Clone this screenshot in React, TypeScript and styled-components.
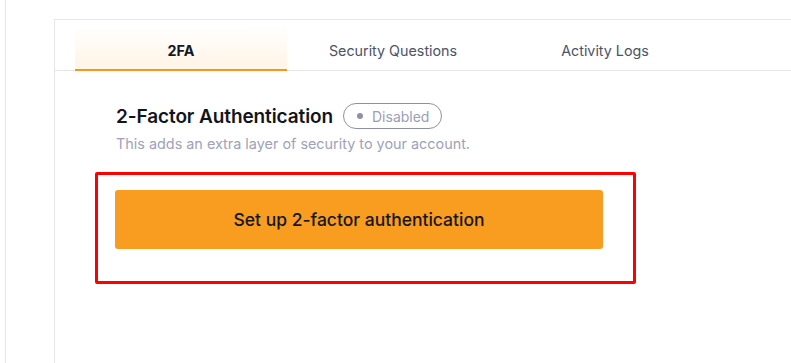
import React, { useState } from "react";
import styled, { createGlobalStyle } from "styled-components";

const Global = createGlobalStyle`
  html, body { margin: 0; padding: 0; background: #ffffff; }
  body { font-family: Inter, "Noto Sans", "Liberation Sans", sans-serif; }
  * { box-sizing: border-box; }
`;

const Page = styled.div`
  display: flex;
  height: 363px;
  overflow: hidden;
`;

const Rail = styled.div`
  width: 6px;
  flex: none;
  border-right: 1px solid #e6e6e6;
`;

const Card = styled.div`
  flex: 1;
  margin-left: 48px;
  margin-top: 19px;
  border-top: 1px solid #e6e6e6;
  border-left: 1px solid #e6e6e6;
  display: flex;
  flex-direction: column;
`;

const TabBar = styled.div`
  display: flex;
  padding: 6px 0 0 20px;
  border-bottom: 1px solid #e6e6e6;
`;

const Tab = styled.button<{ $active?: boolean }>`
  width: 212px;
  height: 45px;
  margin-bottom: -1px;
  border: none;
  border-bottom: 2px solid ${(p) => (p.$active ? "#f7961c" : "transparent")};
  background: ${(p) =>
    p.$active ? "linear-gradient(180deg, #ffffff 0%, #fff4e6 100%)" : "transparent"};
  font-family: inherit;
  font-size: 14.3px;
  font-weight: ${(p) => (p.$active ? 700 : 400)};
  color: ${(p) => (p.$active ? "#141824" : "#4d5266")};
  padding: 6px 0 0;
  cursor: pointer;
`;

const Content = styled.div`
  padding: 32px 0 0 40px;
`;

const Header = styled.div`
  padding-left: 21px;
`;

const TitleRow = styled.div`
  display: flex;
  align-items: center;
  gap: 10px;
`;

const Title = styled.h2`
  margin: 0;
  font-size: 19px;
  font-weight: 600;
  color: #121521;
  letter-spacing: -0.1px;
`;

const Badge = styled.span`
  display: inline-flex;
  align-items: center;
  gap: 9px;
  height: 26px;
  padding: 0 12px 0 13px;
  border: 1px solid #8d91a8;
  border-radius: 13px;
  font-size: 14px;
  color: #9a9eb6;
`;

const Dot = styled.span`
  width: 6px;
  height: 6px;
  border-radius: 50%;
  background: #8d91a8;
`;

const Subtitle = styled.p`
  margin: 6px 0 0;
  font-size: 14.4px;
  color: #9ea2ba;
`;

const Highlight = styled.div`
  margin-top: 20px;
  width: 541px;
  border: 3px solid #ff0000;
  border-radius: 2px;
  padding: 15px 30px 32px 17px;
`;

const PrimaryButton = styled.button`
  width: 488px;
  height: 59px;
  border: none;
  border-radius: 3px;
  background: #f89d1f;
  color: #15161c;
  font-family: inherit;
  font-size: 17.5px;
  font-weight: 500;
  cursor: pointer;
`;

const tabs = ["2FA", "Security Questions", "Activity Logs"];

export default function App() {
  const [active, setActive] = useState(0);
  return (
    <>
      <Global />
      <Page>
        <Rail />
        <Card>
          <TabBar>
            {tabs.map((t, i) => (
              <Tab key={t} $active={i === active} onClick={() => setActive(i)}>
                {t}
              </Tab>
            ))}
          </TabBar>
          <Content>
            <Header>
              <TitleRow>
                <Title>2-Factor Authentication</Title>
                <Badge>
                  <Dot />
                  Disabled
                </Badge>
              </TitleRow>
              <Subtitle>This adds an extra layer of security to your account.</Subtitle>
            </Header>
            <Highlight>
              <PrimaryButton>Set up 2-factor authentication</PrimaryButton>
            </Highlight>
          </Content>
        </Card>
      </Page>
    </>
  );
}
